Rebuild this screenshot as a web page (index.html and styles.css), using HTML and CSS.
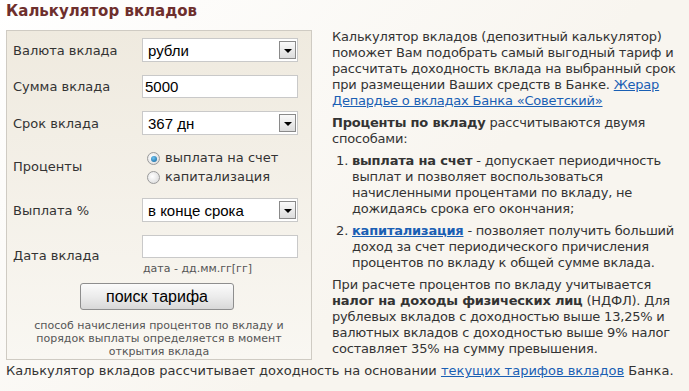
FILE: index.html
```html
<!DOCTYPE html>
<html lang="ru">
<head>
<meta charset="utf-8">
<link rel="stylesheet" href="styles.css">
</head>
<body>
<div class="page">
  <div class="cols">
    <div class="left">
      <h1 class="title">Калькулятор вкладов</h1>
      <div class="panel">
        <div class="row">
          <div class="label">Валюта вклада</div>
          <div class="select"><span class="val">рубли</span><span class="arrow"></span></div>
        </div>
        <div class="row">
          <div class="label">Сумма вклада</div>
          <div class="input">5000</div>
        </div>
        <div class="row">
          <div class="label">Срок вклада</div>
          <div class="select"><span class="val">367 дн</span><span class="arrow"></span></div>
        </div>
        <div class="row row-radio">
          <div class="label">Проценты</div>
          <div class="radios">
            <div class="radio"><span class="dot on"></span>выплата на счет</div>
            <div class="radio"><span class="dot"></span>капитализация</div>
          </div>
        </div>
        <div class="row">
          <div class="label">Выплата %</div>
          <div class="select"><span class="val">в конце срока</span><span class="arrow"></span></div>
        </div>
        <div class="row row-date">
          <div class="label">Дата вклада</div>
          <div class="datebox">
            <div class="input"></div>
            <div class="hint">дата - дд.мм.гг[гг]</div>
          </div>
        </div>
        <div class="btnrow"><button class="btn">поиск тарифа</button></div>
        <p class="note">способ начисления процентов по вкладу и<br>порядок выплаты определяется в момент<br>открытия вклада</p>
      </div>
    </div>
    <div class="right">
      <p>Калькулятор вкладов (депозитный калькулятор)<br>поможет Вам подобрать самый выгодный тариф и<br>рассчитать доходность вклада на выбранный срок<br>при размещении Ваших средств в Банке. <a href="#">Жерар<br>Депардье о вкладах Банка «Советский»</a></p>
      <p><b>Проценты по вкладу</b> рассчитываются двумя<br>способами:</p>
      <ol>
        <li><b>выплата на счет</b> - допускает периодичность<br>выплат и позволяет воспользоваться<br>начисленными процентами по вкладу, не<br>дожидаясь срока его окончания;</li>
        <li><a href="#"><b>капитализация</b></a> - позволяет получить больший<br>доход за счет периодического причисления<br>процентов по вкладу к общей сумме вклада.</li>
      </ol>
      <p>При расчете процентов по вкладу учитывается<br><b>налог на доходы физических лиц</b> (НДФЛ). Для<br>рублевых вкладов с доходностью выше 13,25% и<br>валютных вкладов с доходностью выше 9% налог<br>составляет 35% на сумму превышения.</p>
    </div>
  </div>
  <p class="bottom">Калькулятор вкладов рассчитывает доходность на основании <a href="#">текущих тарифов вкладов</a> Банка.</p>
</div>
</body>
</html>
```

FILE: styles.css
```css
html, body {
  margin: 0;
  padding: 0;
}
body {
  background: linear-gradient(135deg, #ffffff 0%, #f8f5ef 60%, #f8f5ef 100%);
  font-family: "DejaVu Sans", Verdana, sans-serif;
  font-size: 13px;
  color: #333;
  width: 689px;
  height: 391px;
  overflow: hidden;
}
.page {
  padding: 0 0 0 6px;
}
.cols {
  display: flex;
  gap: 20px;
}
.left {
  width: 306px;
  flex: none;
}
.title {
  margin: 0;
  padding-top: 3px;
  height: 30px;
  box-sizing: border-box;
  font-size: 15px;
  line-height: 17px;
  font-weight: bold;
  color: #6e2f2d;
}
.panel {
  border: 1px solid #cfcbc3;
  background: linear-gradient(180deg, #efeadf 0%, #f9f7f2 100%);
  padding: 7px 12px 0 6px;
  height: 330px;
  box-sizing: border-box;
}
.row {
  display: flex;
  align-items: center;
  margin-bottom: 13px;
}
.label {
  width: 129px;
  flex: none;
  color: #333;
}
.select, .input {
  width: 156px;
  height: 24px;
  box-sizing: border-box;
  border: 1px solid #c9c9c9;
  background: #fff;
  font-family: "Liberation Sans", Arial, sans-serif;
  font-size: 15px;
  color: #000;
  display: flex;
  align-items: center;
}
.input {
  height: 23px;
  padding-left: 2px;
}
.select .val {
  flex: 1;
  padding-left: 5px;
}
.arrow {
  width: 17px;
  height: 18px;
  box-sizing: border-box;
  margin-right: 1px;
  border: 1px solid #8a8a8a;
  background: linear-gradient(180deg, #fafafa, #dcdcdc);
  position: relative;
}
.arrow::after {
  content: "";
  position: absolute;
  left: 4px;
  top: 7px;
  border-left: 4px solid transparent;
  border-right: 4px solid transparent;
  border-top: 4px solid #000;
}
.row-radio {
  height: 37px;
}
.radios {
  display: flex;
  flex-direction: column;
  gap: 3px;
  padding-left: 5px;
}
.radio {
  display: flex;
  align-items: center;
  height: 16px;
  color: #333;
}
.dot {
  width: 13px;
  height: 13px;
  box-sizing: border-box;
  border-radius: 50%;
  border: 1px solid #9a9a9a;
  background: radial-gradient(circle at 40% 40%, #ffffff, #d6d6d6);
  margin: 3px 5px 0 0;
  position: relative;
}
.dot.on::after {
  content: "";
  position: absolute;
  left: 2.5px;
  top: 2.5px;
  width: 6px;
  height: 6px;
  border-radius: 50%;
  background: radial-gradient(circle at 40% 35%, #6fc3f0, #0d5f99);
}
.datebox {
  display: flex;
  flex-direction: column;
}
.hint {
  font-size: 11px;
  color: #555;
  padding-left: 1px;
  margin-top: 4px;
  line-height: 13px;
}
.row-date {
  margin-bottom: 8px;
}
.btnrow {
  padding-left: 67px;
}
.btn {
  width: 154px;
  height: 27px;
  border: 1px solid #8e8e8e;
  border-radius: 3px;
  background: linear-gradient(180deg, #fbfbfb 0%, #ececec 50%, #d8d8d8 100%);
  font-family: "Liberation Sans", Arial, sans-serif;
  font-size: 16px;
  color: #000;
  padding: 0;
}
.note {
  margin: 9px 0 0 6px;
  text-align: center;
  font-size: 11px;
  line-height: 13px;
  color: #555;
}
.right {
  width: 356px;
  padding-top: 29px;
  line-height: 16px;
  white-space: nowrap;
  letter-spacing: -0.2px;
}
.right p {
  margin: 0 0 6px;
}
.right ol {
  margin: 0 0 6px;
  padding-left: 20px;
}
.right li {
  margin-bottom: 6px;
}
a {
  color: #1a5fb4;
}
.bottom {
  margin: 0;
  line-height: 16px;
}
```
